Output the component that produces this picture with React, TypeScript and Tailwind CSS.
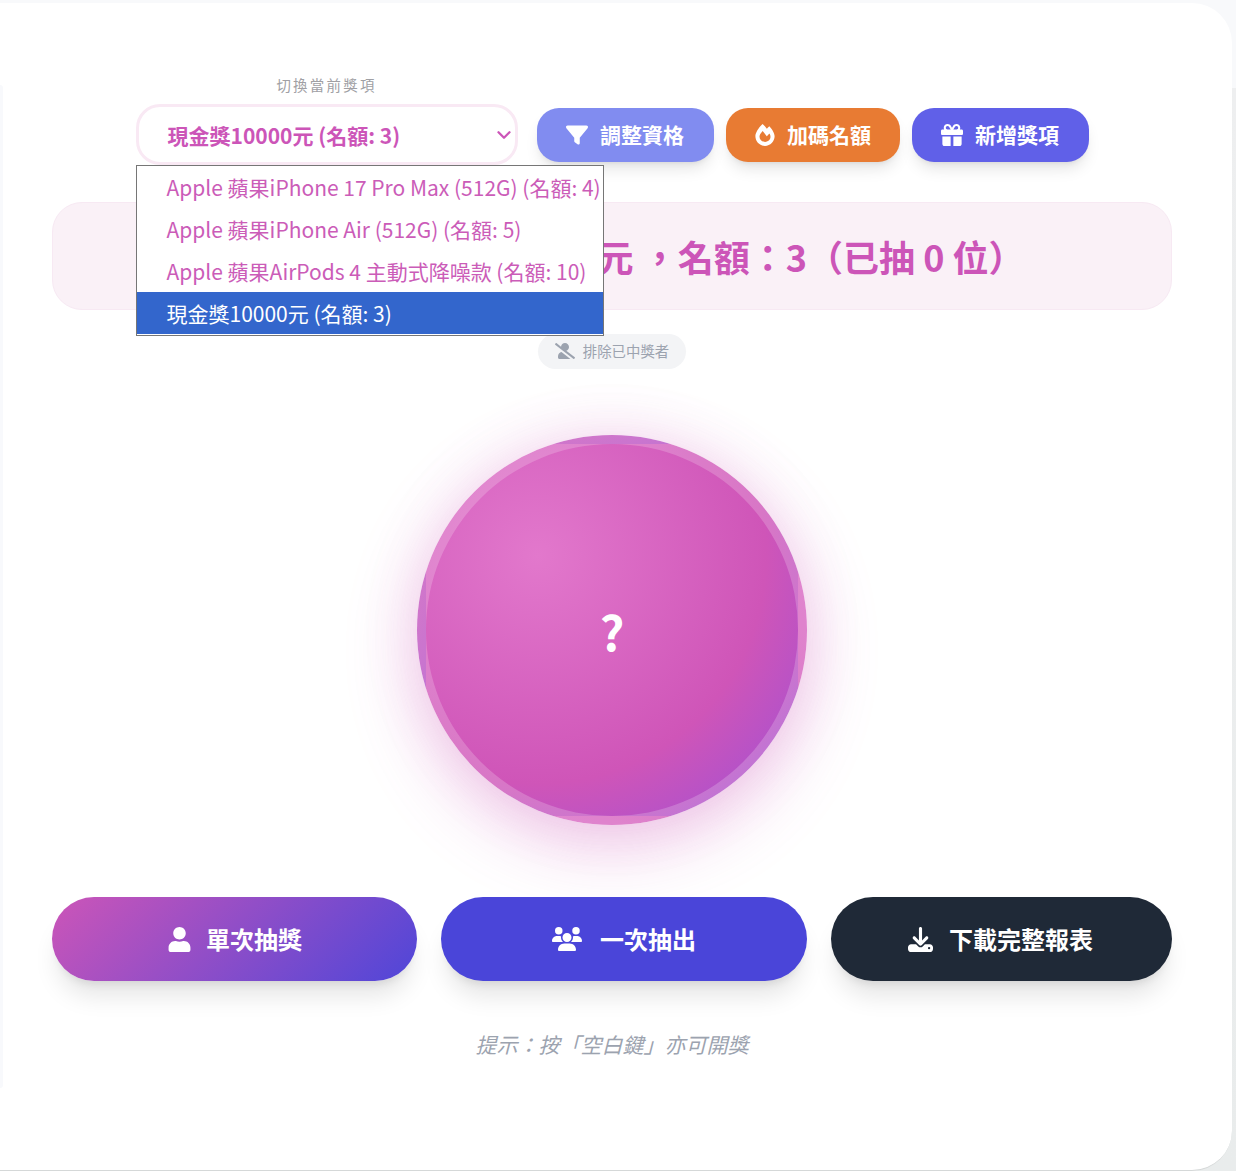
import { FaFireAlt, FaUser, FaUserSlash } from "react-icons/fa";
import { FaDownload, FaFilter, FaGift, FaUsers } from "react-icons/fa6";
import { ChevronDown } from "lucide-react";

const prizes = [
  "Apple 蘋果iPhone 17 Pro Max (512G) (名額: 4)",
  "Apple 蘋果iPhone Air (512G) (名額: 5)",
  "Apple 蘋果AirPods 4 主動式降噪款 (名額: 10)",
  "現金獎10000元 (名額: 3)",
];

export default function App() {
  return (
    <div className="h-[1171px] w-[1236px] overflow-hidden bg-[linear-gradient(to_bottom,#f8f9fb_0,#f8f9fb_88px,#eeeff0_88px,#e9ecec_100%)] pt-[3px] pr-[4px] font-['Noto_Sans_CJK_TC','Noto_Sans',sans-serif]">
      <div className="relative h-[1168px] rounded-r-[40px] border-b border-[#d5d8d8] bg-white pl-[52px] pt-[72px]">
        {/* 左側邊緣的淡色條 */}
        <div className="absolute left-0 top-[82px] h-[1003px] w-[3px] rounded-r-full bg-[#f8f9fc]"></div>
        <div className="w-[1120px]">
          {/* 控制列 */}
          <div className="flex items-end justify-center">
            <div className="relative mr-[19px] w-[382px]">
              <p className="mb-[9px] text-center text-[14.4px] leading-[20px] tracking-[2.3px] text-[#a0a0a4]">切換當前獎項</p>
              <div className="flex h-[61px] items-center justify-between rounded-[24px] border-[3px] border-[#f9e9f4] bg-white pl-[29px]">
                <span className="pt-[2px] text-[21px] font-bold text-[#cc55b8]">現金獎10000元 (名額: 3)</span>
                <ChevronDown size={22} strokeWidth={2.5} className="text-[#cc55b8]" />
              </div>
              {/* 展開中的下拉選單 */}
              <ul className="absolute left-0 top-[90px] z-10 h-[171px] w-[468px] overflow-hidden border border-[#767676] bg-white pb-[1px]">
                {prizes.map((p, i) => (
                  <li
                    key={p}
                    className={`h-[42px] whitespace-nowrap pl-[30px] text-[21px] leading-[42px] ${i === 3 ? "bg-[#3366cc] text-white" : "text-[#cb5cb8]"}`}
                  >
                    {p}
                  </li>
                ))}
              </ul>
            </div>
            <div className="mb-[3px] flex gap-[12px]">
              <button className="flex h-[54px] w-[177px] items-center justify-center gap-[12px] rounded-[22px] bg-[#818cf0] text-[21px] font-bold text-white shadow-lg">
                <FaFilter size={22} /> 調整資格
              </button>
              <button className="flex h-[54px] w-[174px] items-center justify-center gap-[11px] rounded-[22px] bg-[#e87b33] text-[21px] font-bold text-white shadow-lg">
                <FaFireAlt size={22} /> 加碼名額
              </button>
              <button className="flex h-[54px] w-[177px] items-center justify-center gap-[12px] rounded-[22px] bg-[#6060e8] text-[21px] font-bold text-white shadow-lg">
                <FaGift size={22} /> 新增獎項
              </button>
            </div>
          </div>

          {/* 當前獎項 */}
          <div className="mt-[37px] flex h-[108px] items-center justify-center rounded-[30px] border border-[#f7e9f3] bg-[#faf1f7] pl-[4px] text-[36px] font-bold text-[#cc55b8]">
            目前獎項：現金獎10000元 ，名額：3（已抽 0 位）
          </div>

          <div className="mt-[24px] flex justify-center">
            <div className="flex h-[35px] w-[148px] items-center justify-center gap-[8px] rounded-full bg-[#f3f4f6] pb-[2px] text-[14.4px] text-[#9ca3af]">
              <FaUserSlash size={20} /> 排除已中獎者
            </div>
          </div>

          {/* 抽獎球 */}
          <div className="mt-[66px] flex justify-center">
            <div className="flex h-[390px] w-[390px] items-center justify-center rounded-full border-[9px] border-white/20 bg-[radial-gradient(circle_at_30%_30%,#e278cc,#cf55b8_62%,#9a4fd8_100%)] text-[48px] font-bold leading-none text-white shadow-[0_20px_70px_rgba(204,85,184,0.32),0_0_60px_rgba(204,85,184,0.12)]">
              ?
            </div>
          </div>

          {/* 操作按鈕 */}
          <div className="mt-[72px] grid grid-cols-[365fr_366fr_341fr] gap-[24px]">
            <button className="flex h-[84px] items-center justify-center gap-[14px] rounded-[42px] bg-[linear-gradient(135deg,#cc55b8,#4f46d8)] text-[24px] font-bold text-white shadow-xl">
              <FaUser size={25} /> 單次抽獎
            </button>
            <button className="flex h-[84px] items-center justify-center gap-[18px] rounded-[42px] bg-[#4a45d9] text-[24px] font-bold text-white shadow-xl">
              <FaUsers size={30} /> 一次抽出
            </button>
            <button className="flex h-[84px] items-center justify-center gap-[16px] rounded-[42px] bg-[#1f2937] pr-[2px] text-[24px] font-bold text-white shadow-xl">
              <FaDownload size={25} /> 下載完整報表
            </button>
          </div>

          <p className="mt-[47px] text-center text-[21px] italic leading-[32px] text-[#9ca3af]">
            提示：按「空白鍵」亦可開獎
          </p>
        </div>
      </div>
    </div>
  );
}
